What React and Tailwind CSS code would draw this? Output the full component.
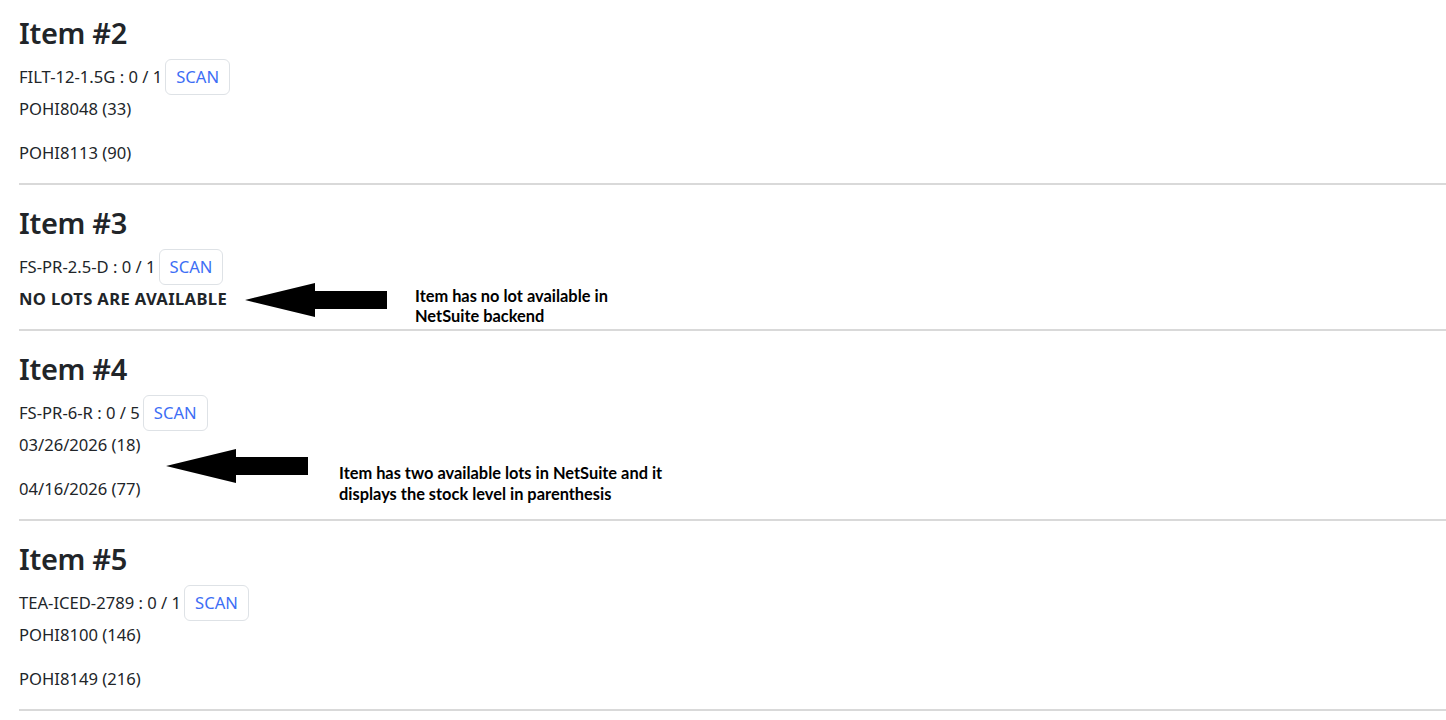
const items = [
  { no: 2, sku: 'FILT-12-1.5G', qty: '0 / 1', lots: ['POHI8048 (33)', 'POHI8113 (90)'] },
  { no: 3, sku: 'FS-PR-2.5-D', qty: '0 / 1', lots: [] },
  { no: 4, sku: 'FS-PR-6-R', qty: '0 / 5', lots: ['03/26/2026 (18)', '04/16/2026 (77)'] },
  { no: 5, sku: 'TEA-ICED-2789', qty: '0 / 1', lots: ['POHI8100 (146)', 'POHI8149 (216)'] },
];

function Arrow({ className }) {
  return (
    <svg className={className} width="142" height="36" viewBox="0 0 142 36">
      <polygon points="0,18 70,1 70,9 142,9 142,27 70,27 70,35" fill="#000" />
    </svg>
  );
}

function Item({ item, first }) {
  return (
    <section className={`border-b-2 border-[#d9d9d9] ${first ? 'pt-[15px]' : 'pt-5'}`}>
      <h2 className="text-[29px] leading-[36px] font-semibold tracking-[-0.3px] text-[#212529] m-0">Item #{item.no}</h2>
      <div className="mt-2 flex items-center h-9">
        <span>{item.sku} : {item.qty}</span>
        <button type="button" className="ml-[3px] h-9 px-[10px] rounded-md border border-[#dee2e6] bg-white text-[#3d6ef5]">
          SCAN
        </button>
      </div>
      {item.lots.length === 0 ? (
        <p className="leading-7 mb-4 font-bold tracking-[0.35px]">NO LOTS ARE AVAILABLE</p>
      ) : (
        item.lots.map((l) => (
          <p key={l} className="leading-7 mb-4">{l}</p>
        ))
      )}
    </section>
  );
}

export default function App() {
  return (
    <div className="bg-white w-[1446px] h-[720px] overflow-hidden relative pl-[19px] text-[16.6px] text-[#212529] font-['Noto_Sans',sans-serif]">
      {items.map((it, i) => (
        <Item key={it.no} item={it} first={i === 0} />
      ))}

      {/* annotations drawn over the screenshot */}
      <Arrow className="absolute left-[245px] top-[282px]" />
      <div className="absolute left-[415px] top-[286px] font-['Lato',sans-serif] font-bold text-[16.4px] leading-[20px] text-black">
        Item has no lot available in<br />NetSuite backend
      </div>
      <Arrow className="absolute left-[166px] top-[448px]" />
      <div className="absolute left-[339px] top-[462px] font-['Lato',sans-serif] font-bold text-[16.4px] leading-[21px] text-black">
        Item has two available lots in NetSuite and it<br />displays the stock level in parenthesis
      </div>
    </div>
  );
}
